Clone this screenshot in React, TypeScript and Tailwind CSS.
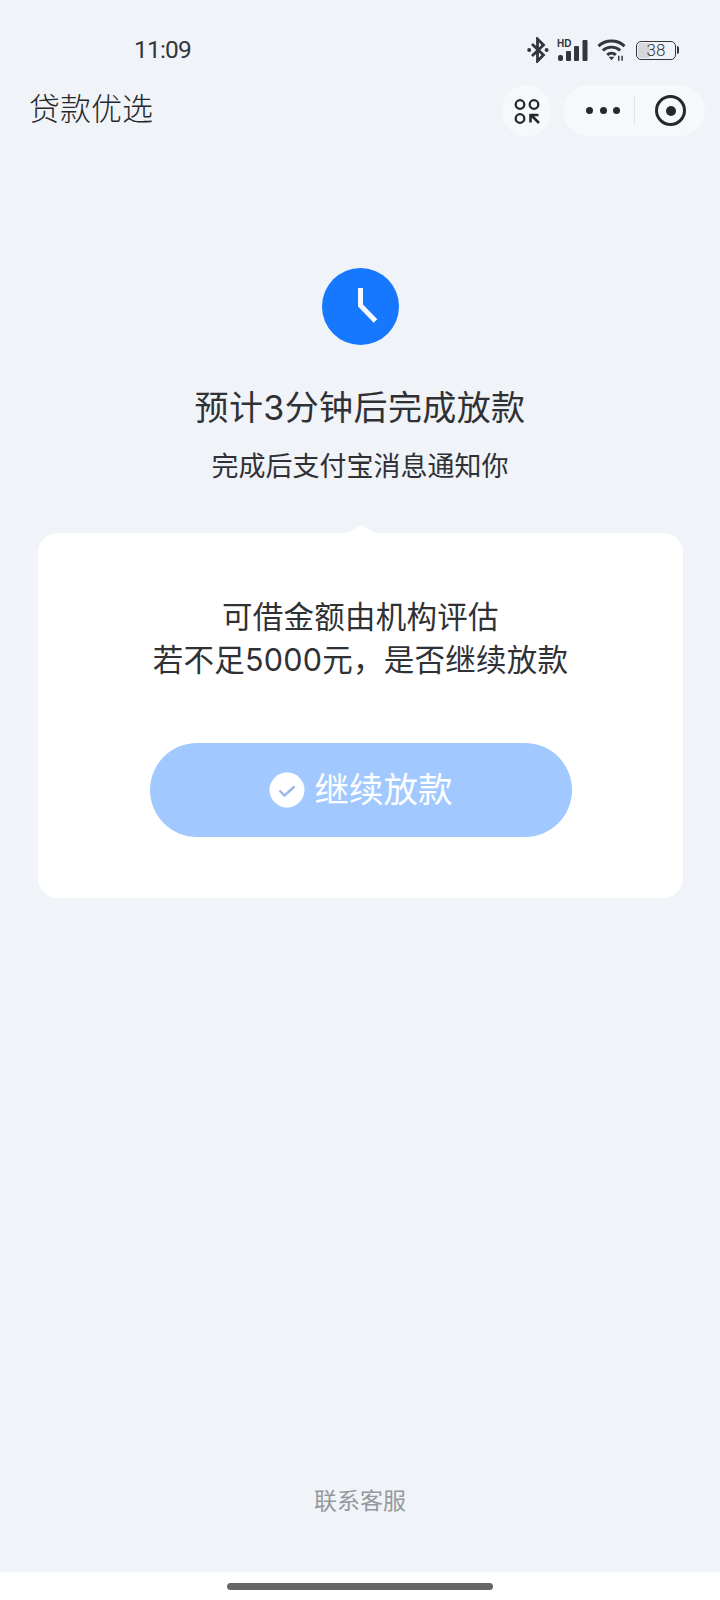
const font = { fontFamily: 'Inter, "Noto Sans CJK SC", sans-serif' };

function Bluetooth() {
  return (
    <svg width="22" height="26" viewBox="0 0 22 26" fill="none">
      <path d="M5 7 16.5 18 10.5 24V2l6 6L5 19" stroke="#33363b" strokeWidth="2.8" />
      <circle cx="2.2" cy="13" r="2" fill="#33363b" />
      <circle cx="19.6" cy="13" r="2" fill="#33363b" />
    </svg>
  );
}

function Signal() {
  return (
    <svg width="31" height="24" viewBox="0 0 31 24" fill="#33363b">
      <text x="0" y="9" fontSize="10" fontWeight="700" fontFamily="Liberation Sans">HD</text>
      <rect x="1" y="17" width="5" height="6" rx="2" />
      <rect x="9" y="13" width="5" height="10" rx="1" />
      <rect x="17" y="8" width="5" height="15" rx="1" />
      <rect x="25.5" y="2" width="5" height="21" rx="1" />
    </svg>
  );
}

function Wifi() {
  return (
    <svg width="29" height="24" viewBox="0 0 30 24" fill="none" stroke="#33363b" strokeWidth="3">
      <path d="M1.5 8C9 1 21 1 28.5 8" />
      <path d="M6 12.5c5-4.6 13-4.6 18 0" />
      <path d="M10.5 17c2.6-2.3 6.4-2.3 9 0" />
      <path d="M12 19h6l-3 3.6z" fill="#33363b" stroke="none" />
      <path d="M22.5 18v5M26 18v5" strokeWidth="1.5" />
    </svg>
  );
}

function Battery() {
  return (
    <div className="flex items-center">
      <div className="relative flex h-[19px] w-[40px] items-center justify-center overflow-hidden rounded-[5px] border-[1.5px] border-[#33363b]">
        <div className="absolute bottom-[1px] left-[1px] top-[1px] w-[12px] rounded-[2px] bg-[#d5d7db]" />
        <span className="relative text-[17px] leading-none font-light text-[#33363b]" style={{ fontFamily: "Roboto, sans-serif" }}>38</span>
      </div>
      <div className="ml-[1px] h-[8px] w-[2px] rounded-r-sm bg-[#33363b]" />
    </div>
  );
}

function ScanIcon() {
  return (
    <svg width="28" height="28" viewBox="0 0 28 28" fill="none" stroke="#26282c" strokeWidth="2.3">
      <circle cx="7" cy="7.5" r="4.3" />
      <circle cx="21" cy="7.5" r="4.3" />
      <circle cx="7" cy="21.5" r="4.3" />
      <path d="M17.5 18h8M17.5 17v8.5M18 18l8 8" strokeWidth="2.6" />
    </svg>
  );
}

export default function App() {
  return (
    <div className="flex h-[1600px] w-[720px] flex-col overflow-hidden bg-white text-[#2f3135]" style={font}>
      <div className="flex h-[1572px] flex-col bg-[#f0f3f8]">
        <div className="mt-[33px] flex h-[34px] items-center justify-between pl-[134px] pr-[41px]">
          <span className="text-[24.5px] leading-none tracking-[-0.8px] text-[#33363b]" style={{ fontFamily: "Roboto, sans-serif" }}>11:09</span>
          <div className="flex items-center">
            <Bluetooth />
            <div className="ml-[8px]"><Signal /></div>
            <div className="ml-[9px]"><Wifi /></div>
            <div className="ml-[10px]"><Battery /></div>
          </div>
        </div>

        <div className="mt-[18px] flex h-[51px] items-center justify-between pl-[29px] pr-[15px]">
          <span className="mb-[5px] text-[31px] leading-none font-light text-[#26282c]">贷款优选</span>
          <div className="flex items-center gap-[12px]">
            <div className="flex h-[51px] w-[49px] items-center justify-center rounded-full bg-[#f7f8fa]">
              <ScanIcon />
            </div>
            <div className="flex h-[51px] w-[142px] items-center rounded-full bg-[#f7f8fa] pl-[23px]">
              <div className="flex w-[48px] items-center gap-[6.5px]">
                <span className="h-[7px] w-[7px] rounded-full bg-[#26282c]" />
                <span className="h-[7px] w-[7px] rounded-full bg-[#26282c]" />
                <span className="h-[7px] w-[7px] rounded-full bg-[#26282c]" />
              </div>
              <div className="h-[30px] w-px bg-[#e2e4e8]" />
              <div className="ml-[20px] flex h-[31px] w-[31px] items-center justify-center rounded-full border-[3.5px] border-[#26282c]">
                <span className="h-[10px] w-[10px] rounded-full bg-[#26282c]" />
              </div>
            </div>
          </div>
        </div>

        <div className="mt-[132px] flex flex-col items-center">
          <div className="flex h-[77px] w-[77px] items-center justify-center rounded-full bg-[#1677ff]">
            <svg width="77" height="77" viewBox="0 0 77 77" fill="none" stroke="#f4f8ff" strokeWidth="5">
              <path d="M38.5 20v17.5L53.5 53" />
            </svg>
          </div>
          <div className="mt-[38px] text-[34px] leading-[50px] tracking-[0.4px]">预计3分钟后完成放款</div>
          <div className="mt-[14px] text-[27px] leading-[40px]">完成后支付宝消息通知你</div>
        </div>

        <div className="relative ml-[38px] mr-[37px] mt-[46px] flex h-[365px] flex-col items-center rounded-[20px] bg-white pt-[62px]">
          <div className="absolute left-1/2 top-[-8px] h-0 w-0 -translate-x-1/2 border-x-[14px] border-b-[8px] border-x-transparent border-b-white" />
          <div className="text-center text-[30.5px] leading-[43px] tracking-[0.25px]">
            <div>可借金额由机构评估</div>
            <div>若不足5000元，是否继续放款</div>
          </div>
          <div className="mt-[62px] flex h-[94px] w-[422px] items-center justify-center gap-[10px] rounded-full bg-[#a2c9ff]">
            <svg width="36" height="36" viewBox="0 0 36 36" fill="none">
              <circle cx="18" cy="18" r="17.5" fill="#fff" />
              <path d="M10.5 18.5l5 5 10-9" stroke="#9cb8e8" strokeWidth="2.4" />
            </svg>
            <span className="text-[34.5px] leading-none text-white">继续放款</span>
          </div>
        </div>

        <div className="mb-[54px] mt-auto text-center text-[23px] leading-[34px] text-[#96989d]">联系客服</div>
      </div>
      <div className="flex flex-1 justify-center pt-[11px]">
        <div className="h-[7px] w-[266px] rounded-full bg-[#666666]" />
      </div>
    </div>
  );
}
